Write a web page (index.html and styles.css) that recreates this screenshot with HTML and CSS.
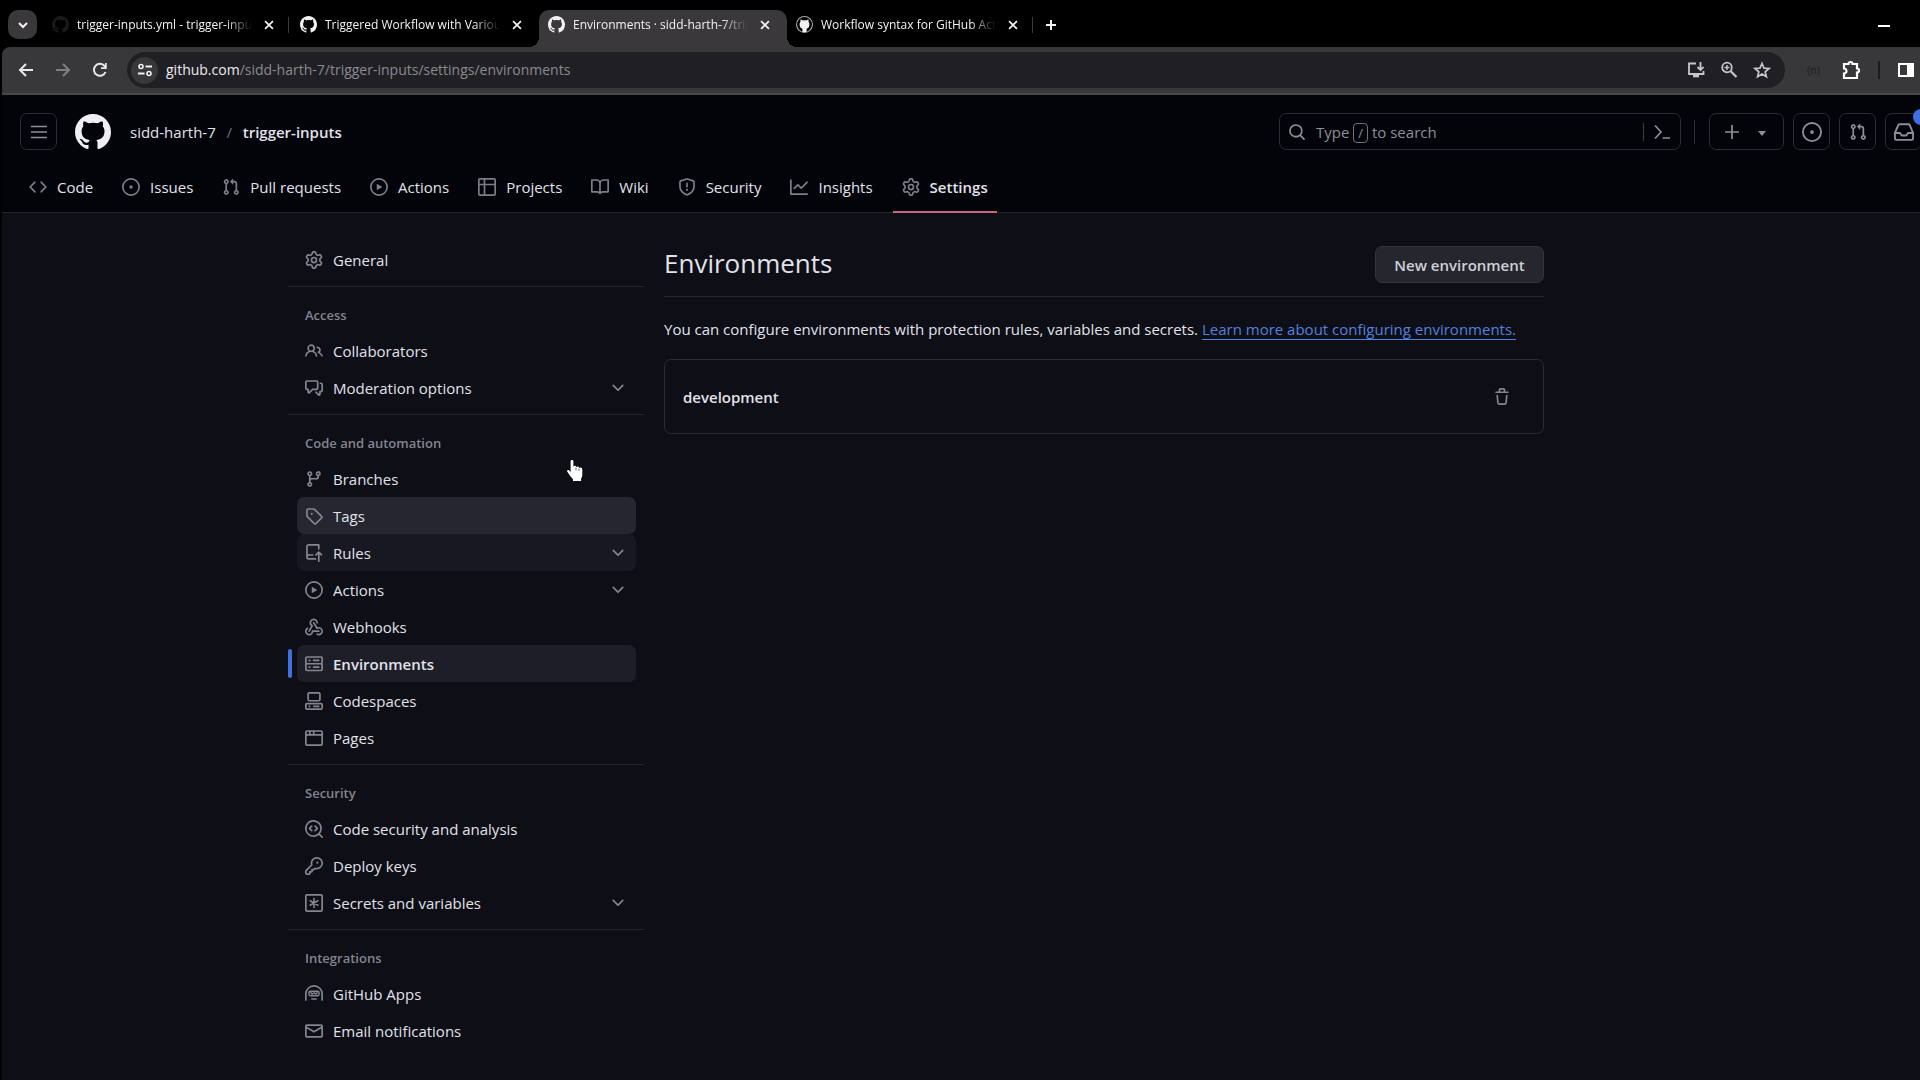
FILE: index.html
```html
<!DOCTYPE html>
<html lang="en">
<head>
<meta charset="utf-8">
<title>Environments · sidd-harth-7/trigger-inputs</title>
<link rel="stylesheet" href="styles.css">
</head>
<body>
<svg class="sprite" aria-hidden="true">
  <symbol id="mark" viewBox="0 0 16 16"><path d="M8 0c4.42 0 8 3.58 8 8a8.013 8.013 0 0 1-5.45 7.59c-.4.08-.55-.17-.55-.38 0-.27.01-1.13.01-2.2 0-.75-.25-1.23-.54-1.48 1.78-.2 3.65-.88 3.65-3.95 0-.88-.31-1.59-.82-2.15.08-.2.36-1.02-.08-2.12 0 0-.67-.22-2.2.82-.64-.18-1.32-.27-2-.27-.68 0-1.36.09-2 .27-1.53-1.03-2.2-.82-2.2-.82-.44 1.1-.16 1.92-.08 2.12-.51.56-.82 1.28-.82 2.15 0 3.06 1.86 3.75 3.64 3.95-.23.2-.44.55-.51 1.07-.46.21-1.61.55-2.33-.66-.15-.24-.6-.83-1.23-.82-.67.01-.27.38.01.53.34.19.73.9.82 1.13.16.45.68 1.31 2.69.94 0 .67.01 1.3.01 1.49 0 .21-.15.45-.55.38A7.995 7.995 0 0 1 0 8c0-4.42 3.58-8 8-8Z"/></symbol>
  <symbol id="mark-alt" viewBox="0 0 16 16"><path fill-rule="evenodd" d="M8 0a8 8 0 1 1 0 16A8 8 0 0 1 8 0Zm0 1a7 7 0 1 0 0 14A7 7 0 0 0 8 1Z" opacity=".7"/><path d="M6 15v-3C3.8 11.500 3.300 9.500 3.400 7.600c0-.9.300-1.500.800-2.100-.2-.6-.1-1.400.1-2.100.8 0 1.500.4 2.100.8 1-.3 2.200-.3 3.200 0 .6-.4 1.300-.8 2.100-.8.2.7.3 1.500.1 2.100.5.6.8 1.200.8 2.100.1 1.900-.4 3.900-2.600 4.400v3Z"/></symbol>
  <symbol id="x" viewBox="0 0 16 16"><path d="M3.500 3.500l9 9m0-9l-9 9" fill="none" stroke="currentColor" stroke-width="2"/></symbol>
  <symbol id="chevron" viewBox="0 0 16 16"><path d="M12.780 5.220a.749.749 0 0 1 0 1.060l-4.250 4.250a.749.749 0 0 1-1.060 0L3.220 6.280a.749.749 0 1 1 1.060-1.060L8 8.939l3.720-3.719a.749.749 0 0 1 1.060 0Z"/></symbol>
  <symbol id="code" viewBox="0 0 16 16"><path d="m11.280 3.220 4.250 4.250a.75.75 0 0 1 0 1.060l-4.250 4.250a.749.749 0 0 1-1.275-.326.749.749 0 0 1 .215-.734L13.940 8l-3.720-3.720a.749.749 0 0 1 .326-1.275.749.749 0 0 1 .734.215Zm-6.560 0a.751.751 0 0 1 1.042.018.751.751 0 0 1 .018 1.042L2.060 8l3.720 3.720a.749.749 0 0 1-.326 1.275.749.749 0 0 1-.734-.215L.47 8.530a.75.75 0 0 1 0-1.060Z"/></symbol>
  <symbol id="issue" viewBox="0 0 16 16"><path d="M8 9.500a1.500 1.500 0 1 0 0-3 1.500 1.500 0 0 0 0 3Z"/><path d="M8 0a8 8 0 1 1 0 16A8 8 0 0 1 8 0ZM1.500 8a6.500 6.500 0 1 0 13 0 6.500 6.500 0 0 0-13 0Z"/></symbol>
  <symbol id="pr" viewBox="0 0 16 16"><path d="M1.500 3.250a2.250 2.250 0 1 1 3 2.122v5.256a2.251 2.251 0 1 1-1.500 0V5.372A2.250 2.250 0 0 1 1.500 3.250Zm5.677-.177L9.573.677A.25.25 0 0 1 10 .854V2.500h1A2.500 2.500 0 0 1 13.500 5v5.628a2.251 2.251 0 1 1-1.500 0V5a1 1 0 0 0-1-1h-1v1.646a.25.25 0 0 1-.427.177L7.177 3.427a.25.25 0 0 1 0-.354ZM3.750 2.500a.75.75 0 1 0 0 1.500.75.75 0 0 0 0-1.500Zm0 9.500a.75.75 0 1 0 0 1.500.75.75 0 0 0 0-1.500Zm8.250.75a.75.75 0 1 0 1.500 0 .75.75 0 0 0-1.500 0Z"/></symbol>
  <symbol id="play" viewBox="0 0 16 16"><path d="M8 0a8 8 0 1 1 0 16A8 8 0 0 1 8 0ZM1.500 8a6.500 6.500 0 1 0 13 0 6.500 6.500 0 0 0-13 0Zm4.879-2.773 4.264 2.559a.25.25 0 0 1 0 .428l-4.264 2.559A.25.25 0 0 1 6 10.559V5.442a.25.25 0 0 1 .379-.215Z"/></symbol>
  <symbol id="table" viewBox="0 0 16 16"><path d="M0 1.750C0 .784.784 0 1.750 0h12.500C15.216 0 16 .784 16 1.750v12.500A1.750 1.750 0 0 1 14.250 16H1.750A1.750 1.750 0 0 1 0 14.250ZM6.500 6.500v8h7.750a.25.25 0 0 0 .25-.25V6.500Zm8-1.500V1.750a.25.25 0 0 0-.25-.25H6.500V5Zm-13 1.500v7.750c0 .138.112.25.25.25H5v-8ZM5 5V1.500H1.750a.25.25 0 0 0-.25.25V5Z"/></symbol>
  <symbol id="book" viewBox="0 0 16 16"><path d="M0 1.750A.75.75 0 0 1 .75 1h4.253c1.227 0 2.317.59 3 1.501A3.743 3.743 0 0 1 11.006 1h4.245a.75.75 0 0 1 .75.75v10.500a.75.75 0 0 1-.75.75h-4.507a2.250 2.250 0 0 0-1.591.659l-.622.621a.75.75 0 0 1-1.060 0l-.622-.621A2.250 2.250 0 0 0 5.258 13H.75a.75.75 0 0 1-.75-.75Zm7.251 10.324.004-5.073-.002-2.253A2.250 2.250 0 0 0 5.003 2.500H1.500v9h3.757a3.750 3.750 0 0 1 1.994.574ZM8.755 4.750l-.004 7.322a3.752 3.752 0 0 1 1.992-.572H14.500v-9h-3.495a2.250 2.250 0 0 0-2.250 2.250Z"/></symbol>
  <symbol id="shield" viewBox="0 0 16 16"><path d="M7.467.133a1.748 1.748 0 0 1 1.066 0l5.250 1.680A1.750 1.750 0 0 1 15 3.480V7c0 1.566-.32 3.182-1.303 4.682-.983 1.498-2.585 2.813-5.032 3.855a1.697 1.697 0 0 1-1.330 0c-2.447-1.042-4.049-2.357-5.032-3.855C1.320 10.182 1 8.566 1 7V3.480a1.750 1.750 0 0 1 1.217-1.667Zm.61 1.429a.25.25 0 0 0-.153 0l-5.250 1.680a.25.25 0 0 0-.174.238V7c0 1.358.275 2.666 1.057 3.860.784 1.194 2.121 2.340 4.366 3.297a.196.196 0 0 0 .154 0c2.245-.956 3.582-2.104 4.366-3.298C13.225 9.666 13.500 8.360 13.500 7V3.480a.251.251 0 0 0-.174-.237l-5.250-1.680ZM8.750 4.750v3a.75.75 0 0 1-1.500 0v-3a.75.75 0 0 1 1.500 0ZM9 10.500a1 1 0 1 1-2 0 1 1 0 0 1 2 0Z"/></symbol>
  <symbol id="graph" viewBox="0 0 16 16"><path d="M1.500 1.750V13.500h13.750a.75.75 0 0 1 0 1.500H.75a.75.75 0 0 1-.75-.75V1.750a.75.75 0 0 1 1.500 0Zm14.280 2.530-5.250 5.250a.75.75 0 0 1-1.060 0L7 7.060 4.280 9.780a.751.751 0 0 1-1.042-.018.751.751 0 0 1-.018-1.042l3.250-3.250a.75.75 0 0 1 1.060 0L10 7.940l4.720-4.720a.751.751 0 0 1 1.042.018.751.751 0 0 1 .018 1.042Z"/></symbol>
  <symbol id="gear" viewBox="0 0 16 16"><path d="M8 0a8.200 8.200 0 0 1 .701.031C9.444.095 9.990.645 10.160 1.290l.288 1.107c.018.066.079.158.212.224.231.114.454.243.668.386.123.082.233.090.299.071l1.103-.303c.644-.176 1.392.021 1.820.630.270.385.506.792.704 1.218.315.675.111 1.422-.364 1.891l-.814.806c-.049.048-.098.147-.088.294.016.257.016.515 0 .772-.010.147.038.246.088.294l.814.806c.475.469.679 1.216.364 1.891a7.977 7.977 0 0 1-.704 1.217c-.428.610-1.176.807-1.820.630l-1.102-.302c-.067-.019-.177-.011-.300.071a5.909 5.909 0 0 1-.668.386c-.133.066-.194.158-.211.224l-.290 1.106c-.168.646-.715 1.196-1.458 1.260a8.006 8.006 0 0 1-1.402 0c-.743-.064-1.289-.614-1.458-1.260l-.289-1.106c-.018-.066-.079-.158-.212-.224a5.738 5.738 0 0 1-.668-.386c-.123-.082-.233-.090-.299-.071l-1.103.303c-.644.176-1.392-.021-1.820-.630a8.120 8.120 0 0 1-.704-1.218c-.315-.675-.111-1.422.363-1.891l.815-.806c.050-.048.098-.147.088-.294a6.214 6.214 0 0 1 0-.772c.010-.147-.038-.246-.088-.294l-.815-.806C.635 6.045.431 5.298.746 4.623a7.920 7.920 0 0 1 .704-1.217c.428-.610 1.176-.807 1.820-.630l1.102.302c.067.019.177.011.300-.071.214-.143.437-.272.668-.386.133-.066.194-.158.211-.224l.290-1.106C6.009.645 6.556.095 7.299.030 7.530.010 7.764 0 8 0Zm-.571 1.525c-.036.003-.108.036-.137.146l-.289 1.105c-.147.561-.549.967-.998 1.189-.173.086-.340.183-.500.290-.417.278-.970.423-1.529.270l-1.103-.303c-.109-.030-.175.016-.195.045-.220.312-.412.644-.573.990-.014.031-.021.110.059.190l.815.806c.411.406.562.957.530 1.456a4.709 4.709 0 0 0 0 .582c.032.499-.119 1.050-.530 1.456l-.815.806c-.081.080-.073.159-.059.190.162.346.353.677.573.989.020.030.085.076.195.046l1.102-.303c.560-.153 1.113-.008 1.530.270.161.107.328.204.501.290.447.222.850.629.997 1.189l.289 1.105c.029.109.101.143.137.146a6.600 6.600 0 0 0 1.142 0c.036-.003.108-.036.137-.146l.289-1.105c.147-.561.549-.967.998-1.189.173-.086.340-.183.500-.290.417-.278.970-.423 1.529-.270l1.103.303c.109.029.175-.016.195-.045.220-.313.411-.644.573-.990.014-.031.021-.110-.059-.190l-.815-.806c-.411-.406-.562-.957-.530-1.456a4.709 4.709 0 0 0 0-.582c-.032-.499.119-1.050.530-1.456l.815-.806c.081-.080.073-.159.059-.190a6.464 6.464 0 0 0-.573-.989c-.020-.030-.085-.076-.195-.046l-1.102.303c-.560.153-1.113.008-1.530-.270a4.440 4.440 0 0 0-.501-.290c-.447-.222-.850-.629-.997-1.189l-.289-1.105c-.029-.110-.101-.143-.137-.146a6.600 6.600 0 0 0-1.142 0ZM11 8a3 3 0 1 1-6 0 3 3 0 0 1 6 0ZM9.500 8a1.500 1.500 0 1 0-3.001.001A1.500 1.500 0 0 0 9.500 8Z"/></symbol>
  <symbol id="people" viewBox="0 0 16 16"><path d="M2 5.500a3.500 3.500 0 1 1 5.898 2.549 5.508 5.508 0 0 1 3.034 4.084.75.75 0 1 1-1.482.235 4 4 0 0 0-7.900 0 .75.75 0 0 1-1.482-.236A5.507 5.507 0 0 1 3.102 8.050 3.493 3.493 0 0 1 2 5.500ZM11 4a3.001 3.001 0 0 1 2.220 5.018 5.010 5.010 0 0 1 2.560 3.012.749.749 0 0 1-.885.954.752.752 0 0 1-.549-.514 3.507 3.507 0 0 0-2.522-2.372.75.75 0 0 1-.574-.73v-.352a.75.75 0 0 1 .416-.672A1.500 1.500 0 0 0 11 5.500.75.75 0 0 1 11 4Zm-5.500-.5a2 2 0 1 0-.001 3.999A2 2 0 0 0 5.500 3.500Z"/></symbol>
  <symbol id="comments" viewBox="0 0 16 16"><path d="M1.750 1h8.500c.966 0 1.750.784 1.750 1.750v5.500A1.750 1.750 0 0 1 10.250 10H7.061l-2.574 2.573A1.458 1.458 0 0 1 2 11.543V10h-.25A1.750 1.750 0 0 1 0 8.250v-5.500C0 1.784.784 1 1.750 1ZM1.500 2.750v5.500c0 .138.112.25.25.25h1a.75.75 0 0 1 .75.75v2.190l2.720-2.720a.749.749 0 0 1 .53-.22h3.500a.25.25 0 0 0 .25-.25v-5.500a.25.25 0 0 0-.25-.25h-8.500a.25.25 0 0 0-.25.25Zm13 2a.25.25 0 0 0-.25-.25h-.5a.75.75 0 0 1 0-1.500h.5c.966 0 1.750.784 1.750 1.750v5.500A1.750 1.750 0 0 1 14.250 12H14v1.543a1.458 1.458 0 0 1-2.487 1.030L9.220 12.280a.749.749 0 0 1 .326-1.275.749.749 0 0 1 .734.215l2.220 2.220v-2.190a.75.75 0 0 1 .75-.75h1a.25.25 0 0 0 .25-.25Z"/></symbol>
  <symbol id="branch" viewBox="0 0 16 16"><path d="M9.500 3.250a2.250 2.250 0 1 1 3 2.122V6A2.500 2.500 0 0 1 10 8.500H6a1 1 0 0 0-1 1v1.128a2.251 2.251 0 1 1-1.500 0V5.372a2.250 2.250 0 1 1 1.500 0v1.836A2.493 2.493 0 0 1 6 7h4a1 1 0 0 0 1-1v-.628A2.250 2.250 0 0 1 9.500 3.250Zm-6 0a.75.75 0 1 0 1.500 0 .75.75 0 0 0-1.500 0Zm8.250-.75a.75.75 0 1 0 0 1.500.75.75 0 0 0 0-1.500ZM4.250 12a.75.75 0 1 0 0 1.500.75.75 0 0 0 0-1.500Z"/></symbol>
  <symbol id="tag" viewBox="0 0 16 16"><path d="M1 7.775V2.750C1 1.784 1.784 1 2.750 1h5.025c.464 0 .91.184 1.238.513l6.250 6.250a1.750 1.750 0 0 1 0 2.474l-5.026 5.026a1.750 1.750 0 0 1-2.474 0l-6.250-6.250A1.752 1.752 0 0 1 1 7.775Zm1.500 0c0 .066.026.13.073.177l6.250 6.250a.25.25 0 0 0 .354 0l5.025-5.025a.25.25 0 0 0 0-.354l-6.250-6.250a.25.25 0 0 0-.177-.073H2.750a.25.25 0 0 0-.25.25ZM6 5a1 1 0 1 1 0 2 1 1 0 0 1 0-2Z"/></symbol>
  <symbol id="push" viewBox="0 0 16 16"><path d="M1 2.500A2.500 2.500 0 0 1 3.500 0h8.750a.75.75 0 0 1 .75.75v3.500a.75.75 0 0 1-1.500 0V1.500h-8a1 1 0 0 0-1 1v6.708A2.493 2.493 0 0 1 3.500 9h3.250a.75.75 0 0 1 0 1.500H3.500a1 1 0 0 0 0 2h5.750a.75.75 0 0 1 0 1.500H3.500A2.500 2.500 0 0 1 1 11.500Zm13.230 7.790-1.230-1.224v6.184a.75.75 0 0 1-1.500 0V9.066L10.280 10.280a.75.75 0 0 1-1.060-1.060l2.500-2.500a.75.75 0 0 1 1.060 0l2.500 2.500a.75.75 0 0 1-1.050 1.070Z"/></symbol>
  <symbol id="webhook" viewBox="0 0 16 16"><path d="M5.500 4.250a2.250 2.250 0 0 1 4.500 0 .75.75 0 0 0 1.500 0 3.750 3.750 0 1 0-6.140 2.889l-2.272 4.258a.75.75 0 0 0 1.324.706L7 7.250a.75.75 0 0 0-.309-1.015A2.250 2.250 0 0 1 5.500 4.250Z"/><path d="M7.364 3.607a.75.75 0 0 1 1.030.257l2.608 4.349a3.750 3.750 0 1 1-.628 6.785.75.75 0 0 1 .752-1.299 2.250 2.250 0 1 0-.033-3.880.75.75 0 0 1-1.030-.256L7.107 4.636a.75.75 0 0 1 .257-1.029Z"/><path d="M2.900 8.776A.75.75 0 0 1 2.625 9.800 2.250 2.250 0 1 0 6 11.750a.75.75 0 0 1 .75-.751h5.500a.75.75 0 0 1 0 1.500H7.425a3.751 3.751 0 1 1-5.550-3.998.75.75 0 0 1 1.024.274Z"/></symbol>
  <symbol id="server" viewBox="0 0 16 16"><path d="M1.750 1h12.500c.966 0 1.750.784 1.750 1.750v4c0 .372-.116.717-.314 1 .198.283.314.628.314 1v4a1.750 1.750 0 0 1-1.750 1.750H1.750A1.750 1.750 0 0 1 0 12.750v-4c0-.358.109-.707.314-1a1.739 1.739 0 0 1-.314-1v-4C0 1.784.784 1 1.750 1ZM1.500 2.750v4c0 .138.112.25.25.25h12.500a.25.25 0 0 0 .25-.25v-4a.25.25 0 0 0-.25-.25H1.750a.25.25 0 0 0-.25.25Zm.25 5.750a.25.25 0 0 0-.25.25v4c0 .138.112.25.25.25h12.500a.25.25 0 0 0 .25-.25v-4a.25.25 0 0 0-.25-.25ZM7 4.750A.75.75 0 0 1 7.750 4h4.500a.75.75 0 0 1 0 1.500h-4.500A.75.75 0 0 1 7 4.750ZM7.750 10h4.500a.75.75 0 0 1 0 1.500h-4.500a.75.75 0 0 1 0-1.500ZM3 4.750A.75.75 0 0 1 3.750 4h.5a.75.75 0 0 1 0 1.500h-.5A.75.75 0 0 1 3 4.750ZM3.750 10h.5a.75.75 0 0 1 0 1.500h-.5a.75.75 0 0 1 0-1.500Z"/></symbol>
  <symbol id="codespaces" viewBox="0 0 16 16"><path d="M0 11.250c0-.966.784-1.750 1.750-1.750h12.500c.966 0 1.750.784 1.750 1.750v3A1.750 1.750 0 0 1 14.250 16H1.750A1.750 1.750 0 0 1 0 14.250Zm2-9.500C2 .784 2.784 0 3.750 0h8.500C13.216 0 14 .784 14 1.750v5a1.750 1.750 0 0 1-1.750 1.750h-8.500A1.750 1.750 0 0 1 2 6.750Zm1.750-.25a.25.25 0 0 0-.25.25v5c0 .138.112.25.25.25h8.500a.25.25 0 0 0 .25-.25v-5a.25.25 0 0 0-.25-.25Zm-2 9.500a.25.25 0 0 0-.25.25v3c0 .138.112.25.25.25h12.500a.25.25 0 0 0 .25-.25v-3a.25.25 0 0 0-.25-.25Z"/><path d="M7 12.750a.75.75 0 0 1 .75-.75h4.500a.75.75 0 0 1 0 1.500h-4.500a.75.75 0 0 1-.75-.75Zm-4 0a.75.75 0 0 1 .75-.75h.5a.75.75 0 0 1 0 1.500h-.5a.75.75 0 0 1-.75-.75Z"/></symbol>
  <symbol id="browser" viewBox="0 0 16 16"><path d="M0 2.750C0 1.784.784 1 1.750 1h12.500c.966 0 1.750.784 1.750 1.750v10.500A1.750 1.750 0 0 1 14.250 15H1.750A1.750 1.750 0 0 1 0 13.250ZM14.500 6h-13v7.250c0 .138.112.25.25.25h12.500a.25.25 0 0 0 .25-.25Zm-6-3.500v2h6V2.750a.25.25 0 0 0-.25-.25ZM5 2.500v2h2v-2Zm-3.250 0a.25.25 0 0 0-.25.25V4.500h2v-2Z"/></symbol>
  <symbol id="codescan" viewBox="0 0 16 16"><path d="M8.470 4.970a.75.75 0 0 0 0 1.060L9.940 7.500 8.470 8.970a.75.75 0 1 0 1.060 1.060l2-2a.75.75 0 0 0 0-1.060l-2-2a.75.75 0 0 0-1.060 0ZM6.530 6.030a.75.75 0 0 0-1.060-1.060l-2 2a.75.75 0 0 0 0 1.060l2 2a.75.75 0 1 0 1.060-1.060L5.060 7.500l1.470-1.470Z"/><path d="M12.246 13.307a7.501 7.501 0 1 1 1.060-1.060l2.474 2.473a.749.749 0 1 1-1.060 1.060ZM1.500 7.500a6.002 6.002 0 0 0 3.608 5.504 6.002 6.002 0 0 0 6.486-1.117.748.748 0 0 1 .292-.293A6 6 0 1 0 1.500 7.500Z"/></symbol>
  <symbol id="key" viewBox="0 0 16 16"><path d="M10.500 0a5.499 5.499 0 1 1-1.288 10.848l-.932.932a.749.749 0 0 1-.53.22H7v.75a.749.749 0 0 1-.22.53l-.5.5a.749.749 0 0 1-.53.22H5v.75a.749.749 0 0 1-.22.53l-.5.5a.749.749 0 0 1-.53.22h-2A1.750 1.750 0 0 1 0 14.250v-2c0-.199.079-.389.22-.53l4.932-4.932A5.500 5.500 0 0 1 10.500 0Zm-4 5.500c-.001.431.069.86.205 1.269a.75.75 0 0 1-.181.768L1.500 12.560v1.690c0 .138.112.25.25.25h1.690l.06-.06v-1.190a.75.75 0 0 1 .75-.75h1.190l.06-.06v-1.190a.75.75 0 0 1 .75-.75h1.190l1.023-1.025a.75.75 0 0 1 .768-.18A4 4 0 1 0 6.500 5.500ZM11 6a1 1 0 1 1 0-2 1 1 0 0 1 0 2Z"/></symbol>
  <symbol id="asterisk" viewBox="0 0 16 16"><path d="M14.250 0C15.216 0 16 .784 16 1.750v12.500A1.750 1.750 0 0 1 14.250 16H1.750A1.750 1.750 0 0 1 0 14.250V1.750C0 .784.784 0 1.750 0Zm0 1.500H1.750a.25.25 0 0 0-.25.25v12.500c0 .138.112.25.25.25h12.500a.25.25 0 0 0 .25-.25V1.750a.25.25 0 0 0-.25-.25Z"/><path d="M8 4v8M4.600 6l6.800 4M11.400 6l-6.800 4" fill="none" stroke="currentColor" stroke-width="1.400" stroke-linecap="round"/></symbol>
  <symbol id="hubot" viewBox="0 0 16 16"><path d="M0 8a8 8 0 1 1 16 0v5.250a.75.75 0 0 1-1.500 0V8a6.500 6.500 0 1 0-13 0v5.250a.75.75 0 0 1-1.500 0Z"/><path d="M6 12.500h4M4.750 5.500h6.500a1.200 1.200 0 0 1 1.200 1.200v1.600a1.200 1.200 0 0 1-1.200 1.200h-6.500a1.200 1.200 0 0 1-1.200-1.200V6.700a1.200 1.200 0 0 1 1.200-1.200ZM5.200 6.800l1.200 1.200L8 6.900l1.600 1.100 1.200-1.200" fill="none" stroke="currentColor" stroke-width="1.300" stroke-linecap="round"/></symbol>
  <symbol id="mail" viewBox="0 0 16 16"><path d="M1.750 2h12.500c.966 0 1.750.784 1.750 1.750v8.500A1.750 1.750 0 0 1 14.250 14H1.750A1.750 1.750 0 0 1 0 12.250v-8.500C0 2.784.784 2 1.750 2ZM1.500 12.251c0 .138.112.25.25.25h12.500a.25.25 0 0 0 .25-.25V5.809L8.380 9.397a.75.75 0 0 1-.76 0L1.500 5.809v6.442Zm13-8.181v-.32a.25.25 0 0 0-.25-.25H1.750a.25.25 0 0 0-.25.25v.32L8 7.880Z"/></symbol>
  <symbol id="search" viewBox="0 0 16 16"><path d="M10.680 11.740a6 6 0 0 1-7.922-8.982 6 6 0 0 1 8.982 7.922l3.040 3.040a.749.749 0 0 1-.326 1.275.749.749 0 0 1-.734-.215ZM11.500 7a4.499 4.499 0 1 0-8.997 0A4.499 4.499 0 0 0 11.500 7Z"/></symbol>
  <symbol id="inbox" viewBox="0 0 16 16"><path d="M2.800 2.060A1.750 1.750 0 0 1 4.410 1h7.180c.7 0 1.333.417 1.610 1.060l2.740 6.395c.04.093.06.194.06.295v4.500A1.750 1.750 0 0 1 14.250 15H1.750A1.750 1.750 0 0 1 0 13.250v-4.500c0-.101.020-.202.060-.295Zm1.610.44a.25.25 0 0 0-.23.152L1.887 8H4.750a.75.75 0 0 1 .6.300L6.625 10h2.750l1.275-1.700a.75.75 0 0 1 .6-.300h2.863L11.820 2.652a.25.25 0 0 0-.23-.152Zm10.090 7h-2.875l-1.275 1.700a.75.75 0 0 1-.6.300h-3.500a.75.75 0 0 1-.6-.300L4.375 9.500H1.500v3.750c0 .138.112.25.25.25h12.500a.25.25 0 0 0 .25-.25Z"/></symbol>
  <symbol id="trash" viewBox="0 0 16 16"><path d="M11 1.750V3h2.250a.75.75 0 0 1 0 1.500H2.750a.75.75 0 0 1 0-1.500H5V1.750C5 .784 5.784 0 6.750 0h2.500C10.216 0 11 .784 11 1.750ZM4.496 6.675l.66 6.600a.25.25 0 0 0 .249.225h5.190a.25.25 0 0 0 .249-.225l.66-6.600a.75.75 0 0 1 1.492.149l-.66 6.600A1.748 1.748 0 0 1 10.595 15h-5.190a1.750 1.750 0 0 1-1.741-1.575l-.66-6.600a.75.75 0 1 1 1.492-.150ZM6.500 1.750V3h3V1.750a.25.25 0 0 0-.25-.25h-2.500a.25.25 0 0 0-.25.25Z"/></symbol>
</svg>

<header class="browser">
  <div class="tabstrip">
    <button class="tab-search" aria-label="Search tabs"><svg class="i14 outline" viewBox="0 0 14 14"><path d="M3 5l4 4 4-4" stroke-width="2"/></svg></button>
    <div class="tabs">
      <div class="tab"><svg class="fav dim"><use href="#mark"/></svg><span class="tab-title">trigger-inputs.yml - trigger-inputs</span><button class="close" aria-label="Close tab"><svg class="i14"><use href="#x"/></svg></button></div>
      <div class="tab divided"><svg class="fav"><use href="#mark"/></svg><span class="tab-title">Triggered Workflow with Various Events</span><button class="close" aria-label="Close tab"><svg class="i14"><use href="#x"/></svg></button></div>
      <div class="tab active"><svg class="fav"><use href="#mark"/></svg><span class="tab-title">Environments · sidd-harth-7/trigger-inputs</span><button class="close" aria-label="Close tab"><svg class="i14"><use href="#x"/></svg></button></div>
      <div class="tab"><svg class="fav"><use href="#mark-alt"/></svg><span class="tab-title">Workflow syntax for GitHub Actions</span><button class="close" aria-label="Close tab"><svg class="i14"><use href="#x"/></svg></button></div>
    </div>
    <button class="new-tab divided" aria-label="New tab"><svg class="i14" viewBox="0 0 14 14"><path d="M7 2v10M2 7h10" fill="none" stroke="currentColor" stroke-width="2"/></svg></button>
    <button class="minimize" aria-label="Minimize"></button>
  </div>
  <div class="toolbar">
    <button class="tool" aria-label="Back"><svg class="i16" viewBox="0 0 16 16"><path d="M15 8H2.500M8 2L2 8l6 6" fill="none" stroke="currentColor" stroke-width="2"/></svg></button>
    <button class="tool faded" aria-label="Forward"><svg class="i16" viewBox="0 0 16 16"><path d="M1 8h12.500M8 2l6 6-6 6" fill="none" stroke="currentColor" stroke-width="2"/></svg></button>
    <button class="tool" aria-label="Reload"><svg class="i16" viewBox="0 0 16 16"><path d="M13.500 10A6 6 0 1 1 12.600 4L14 5.500" fill="none" stroke="currentColor" stroke-width="2"/><path d="M14.700 1v6H9V5.300h4V1Z"/></svg></button>
    <div class="address">
      <button class="site-info" aria-label="Site information"><svg class="i16" viewBox="0 0 16 16"><path d="M8.500 4.500H15M1 11.500h6.500" stroke="currentColor" stroke-width="2"/><circle cx="4" cy="4.500" r="2" fill="none" stroke="currentColor" stroke-width="1.600"/><circle cx="12" cy="11.500" r="2" fill="none" stroke="currentColor" stroke-width="1.600"/></svg></button>
      <span class="url"><b>github.com</b>/sidd-harth-7/trigger-inputs/settings/environments</span>
      <button class="tool" aria-label="Install"><svg class="i18 outline" viewBox="0 0 18 18"><path d="M9 2.500H2v10.500h14.500V10M13.500 1v7.500M10.500 6l3 3 3-3" stroke-width="1.800"/><path d="M6 14.800h6" stroke-width="3"/></svg></button>
      <button class="tool" aria-label="Zoom"><svg class="i18 outline" viewBox="0 0 18 18"><circle cx="7" cy="6.500" r="4.800" stroke-width="1.800"/><path d="M10.500 10l6 6" stroke-width="2.200"/><path d="M7 4v5M4.500 6.500h5" stroke-width="1.400"/></svg></button>
      <button class="tool" aria-label="Bookmark"><svg class="i18" viewBox="0 0 18 18"><path d="M9 2.500l2 4.600 5 .4-3.800 3.300 1.200 4.900L9 13.100l-4.400 2.600 1.200-4.900L2 7.500l5-.4Z" fill="none" stroke="currentColor" stroke-width="1.700"/></svg></button>
    </div>
    <button class="tool ext" aria-label="Extension">(n)</button>
    <button class="tool bright" aria-label="Extensions"><svg class="i20" viewBox="0 0 20 20"><path d="M3 4h4.500a2 2 0 0 1 4 0H16v4.500a2 2 0 0 1 0 4V18H3v-4.500a2.300 2.300 0 0 0 0-5Z" fill="none" stroke="currentColor" stroke-width="2.200"/></svg></button>
    <span class="tool-rule"></span>
    <button class="tool bright" aria-label="Side panel"><svg class="i16" viewBox="0 0 16 16"><path d="M0 1h16v14H0ZM2 3v10h7V3Z" fill-rule="evenodd"/></svg></button>
  </div>
</header>

<div class="page">
  <header class="site">
    <div class="topbar">
      <button class="square" aria-label="Menu"><svg class="i20" viewBox="0 0 20 20"><path d="M2 4.500h16M2 10h16M2 15.500h16" stroke="currentColor" stroke-width="1.500"/></svg></button>
      <a class="logo" href="#" aria-label="Homepage"><svg class="i36"><use href="#mark"/></svg></a>
      <div class="crumbs"><a href="#">sidd-harth-7</a><span class="slash">/</span><a class="repo" href="#">trigger-inputs</a></div>
      <button class="searchbox"><svg class="i18"><use href="#search"/></svg><span class="search-hint">Type <kbd>/</kbd> to search</span><span class="prompt"><svg class="i18 outline" viewBox="0 0 18 18"><path d="M2 2.500l6 6.500-6 6.500M9.500 15H17" stroke-width="1.700"/></svg></span></button>
      <span class="top-rule"></span>
      <div class="actions">
        <button class="create" aria-label="Create new"><svg class="i16" viewBox="0 0 16 16"><path d="M8 1v14M1 8h14" stroke="currentColor" stroke-width="1.700"/></svg><svg class="caret" viewBox="0 0 8 5"><path d="M0 0h8L4 5Z"/></svg></button>
        <button class="square" aria-label="Issues"><svg class="i20"><use href="#issue"/></svg></button>
        <button class="square" aria-label="Pull requests"><svg class="i18"><use href="#pr"/></svg></button>
        <button class="square" aria-label="Notifications"><svg class="i20"><use href="#inbox"/></svg><span class="dot"></span></button>
      </div>
    </div>
    <nav class="reponav" aria-label="Repository">
      <a href="#"><svg class="i18"><use href="#code"/></svg>Code</a>
      <a href="#"><svg class="i18"><use href="#issue"/></svg>Issues</a>
      <a href="#"><svg class="i18"><use href="#pr"/></svg>Pull requests</a>
      <a href="#"><svg class="i18"><use href="#play"/></svg>Actions</a>
      <a href="#"><svg class="i18"><use href="#table"/></svg>Projects</a>
      <a href="#"><svg class="i18"><use href="#book"/></svg>Wiki</a>
      <a href="#"><svg class="i18"><use href="#shield"/></svg>Security</a>
      <a href="#"><svg class="i18"><use href="#graph"/></svg>Insights</a>
      <a href="#" class="current"><svg class="i18"><use href="#gear"/></svg>Settings</a>
    </nav>
  </header>

  <div class="content">
    <nav class="sidebar" aria-label="Settings">
      <ul>
        <li><a href="#"><svg class="i18"><use href="#gear"/></svg>General</a></li>
      </ul>
      <h3>Access</h3>
      <ul>
        <li><a href="#"><svg class="i18"><use href="#people"/></svg>Collaborators</a></li>
        <li><a href="#"><svg class="i18"><use href="#comments"/></svg>Moderation options<svg class="i18 more"><use href="#chevron"/></svg></a></li>
      </ul>
      <h3>Code and automation</h3>
      <ul>
        <li><a href="#"><svg class="i18"><use href="#branch"/></svg>Branches</a></li>
        <li><a href="#" class="hover"><svg class="i18"><use href="#tag"/></svg>Tags</a></li>
        <li><a href="#" class="leaving"><svg class="i18"><use href="#push"/></svg>Rules<svg class="i18 more"><use href="#chevron"/></svg></a></li>
        <li><a href="#"><svg class="i18"><use href="#play"/></svg>Actions<svg class="i18 more"><use href="#chevron"/></svg></a></li>
        <li><a href="#"><svg class="i18"><use href="#webhook"/></svg>Webhooks</a></li>
        <li><a href="#" class="selected"><svg class="i18"><use href="#server"/></svg>Environments</a></li>
        <li><a href="#"><svg class="i18"><use href="#codespaces"/></svg>Codespaces</a></li>
        <li><a href="#"><svg class="i18"><use href="#browser"/></svg>Pages</a></li>
      </ul>
      <h3>Security</h3>
      <ul>
        <li><a href="#"><svg class="i18"><use href="#codescan"/></svg>Code security and analysis</a></li>
        <li><a href="#"><svg class="i18"><use href="#key"/></svg>Deploy keys</a></li>
        <li><a href="#"><svg class="i18"><use href="#asterisk"/></svg>Secrets and variables<svg class="i18 more"><use href="#chevron"/></svg></a></li>
      </ul>
      <h3>Integrations</h3>
      <ul>
        <li><a href="#"><svg class="i18"><use href="#hubot"/></svg>GitHub Apps</a></li>
        <li><a href="#"><svg class="i18"><use href="#mail"/></svg>Email notifications</a></li>
      </ul>
    </nav>
    <main>
      <div class="heading"><h2>Environments</h2><button class="primary">New environment</button></div>
      <p>You can configure environments with protection rules, variables and secrets. <a href="#">Learn more about configuring environments.</a></p>
      <div class="card"><a href="#">development</a><button class="delete" aria-label="Delete environment"><svg class="i18"><use href="#trash"/></svg></button></div>
    </main>
  </div>
</div>
<svg class="cursor" viewBox="0 0 18 23" aria-hidden="true"><path d="M6 1c.9 0 1.400.6 1.400 1.500V7.500l1.200-.8c.9 0 1.500.5 1.600 1.300l1.200-.6c.9 0 1.500.6 1.700 1.400l1.200-.4c1.200 0 2 .8 2 2v5.600c0 1.500-.6 2.400-1.200 3.600V22H7v-1.800C5 18 3 15.500 1.200 12.500.8 11.300 1.800 10.500 2.900 11.200L4.600 13V2.500C4.600 1.600 5.100 1 6 1Z"/><path d="M10 8.500v3M13 9.500v2.500" fill="none" stroke="#333" stroke-width=".7"/></svg>
</body>
</html>
```
FILE: styles.css
```css
* { box-sizing: border-box; }
body {
  margin: 0;
  padding-left: 2px;
  min-height: 100vh;
  display: flex;
  flex-direction: column;
  background: #000;
  color: #e2e2ea;
  font: 15px/22px "Open Sans", "Noto Sans", sans-serif;
  overflow-x: hidden;
}
a { color: inherit; text-decoration: none; }
button { padding: 0; border: 0; background: none; color: inherit; font: inherit; }
svg { fill: currentColor; flex: none; }
ul { margin: 0; padding: 0; list-style: none; }
h2, h3, p { margin: 0; }
.sprite { position: absolute; width: 0; height: 0; }
.outline { fill: none; stroke: currentColor; }
.i14 { width: 14px; height: 14px; }
.i16 { width: 16px; height: 16px; }
.i18 { width: 18px; height: 18px; }
.i20 { width: 20px; height: 20px; }
.i36 { width: 36px; height: 36px; }

.tabstrip { display: flex; height: 47px; padding: 10px 30px 0 6px; color: #f2f2f2; font-size: 12px; }
.tab-search { display: grid; place-items: center; width: 29px; height: 29px; border-radius: 10px; background: #3a383b; }
.tabs { display: flex; margin-left: 6px; }
.tab { position: relative; display: flex; align-items: center; width: 248px; height: 37px; padding: 0 14px 8px 9px; gap: 8px; }
.fav { width: 17px; height: 17px; }
.dim { color: #1a1a1b; }
.tab-title { flex: 1; overflow: hidden; white-space: nowrap; line-height: 20px; mask-image: linear-gradient(90deg, #000 85%, transparent); }
.close { display: grid; place-items: center; width: 17px; height: 17px; }
.active { border-radius: 10px 10px 0 0; background: #3a383b; }
.active::before, .active::after { content: ""; position: absolute; bottom: 0; width: 10px; height: 10px; }
.active::before { left: -10px; background: radial-gradient(circle at 0 0, transparent 10px, #3a383b 10px); }
.active::after { right: -10px; background: radial-gradient(circle at 100% 0, transparent 10px, #3a383b 10px); }
.divided { position: relative; }
.divided::before { content: ""; position: absolute; left: -3px; top: 7px; width: 1px; height: 16px; background: #3c3c3e; }
.new-tab { display: grid; place-items: center; width: 32px; height: 30px; }
.minimize { width: 12px; height: 2px; margin: 15px 0 0 auto; background: #fff; }

.toolbar { display: flex; align-items: center; height: 48px; padding: 0 0 0 5px; background: #38373a; border-bottom: 2px solid #48474b; border-radius: 8px 0 0; color: #e8e8ea; }
.tool { display: grid; place-items: center; width: 33px; height: 34px; }
.toolbar > .tool { width: 37px; }
.toolbar > .tool:last-child { width: 28px; }
.faded { color: #808084; }
.bright { color: #fff; }
.address { flex: 1; display: flex; align-items: center; height: 36px; margin: 0 10px 0 9px; padding: 0 7px 0 4px; border-radius: 18px; background: #201f24; color: #c5c5ca; }
.site-info { display: grid; place-items: center; width: 27px; height: 27px; margin-right: 8px; border-radius: 50%; background: #38373a; color: #f0f0f0; }
.url { flex: 1; color: #8a8a90; font-size: 14px; }
.url b { color: #ededf0; font-weight: 400; }
.ext { color: #1d1d20; font-size: 11px; }
.tool-rule { width: 2px; height: 18px; margin: 0 12px 0 9px; background: #1c1c1f; }

.page { flex: 1; background: #0d0e16; }
.site { background: #02040a; border-bottom: 1px solid #25262d; }
.topbar { display: flex; align-items: center; height: 73px; padding: 0 0 0 18px; color: #8d8e98; }
.square { position: relative; display: grid; place-items: center; flex: none; width: 37px; height: 37px; border: 1px solid #2a2c36; border-radius: 7px; }
.logo { display: flex; margin-left: 18px; color: #eeeef4; }
.crumbs { flex: 1; display: flex; margin-left: 19px; color: #e2e2ea; white-space: nowrap; }
.slash { width: 27px; text-align: center; color: #70717a; }
.repo { font-weight: 600; }
.searchbox { display: flex; align-items: center; width: 402px; height: 37px; padding: 0 9px 0 8px; gap: 10px; border: 1px solid #2a2c36; border-radius: 7px; text-align: left; }
.search-hint { flex: 1; }
kbd { padding: 0 4px; border: 1px solid #70717a; border-radius: 4px; font: 13px/18px "Open Sans", sans-serif; }
.prompt { display: flex; padding-left: 9px; border-left: 1px solid #3a3b44; }
.top-rule { width: 1px; height: 24px; margin: 0 14px 0 13px; background: #2a2c36; }
.actions { display: flex; gap: 9px; margin-right: -2px; }
.create { display: flex; align-items: center; justify-content: center; gap: 18px; width: 75px; padding-right: 4px; border: 1px solid #2a2c36; border-radius: 7px; }
.caret { width: 8px; height: 5px; margin-top: 4px; }
.dot { position: absolute; right: -8px; top: -5px; width: 16px; height: 16px; border-radius: 50%; background: #3f6fe0; }
.reponav { display: flex; gap: 11px; height: 44px; padding-left: 18px; }
.reponav a { display: flex; align-items: center; gap: 10px; padding: 0 9px 6px; white-space: nowrap; }
.reponav svg { color: #7d7e88; }
.reponav .current { position: relative; font-weight: 600; }
.current::after { content: ""; position: absolute; left: 0; right: 0; bottom: -1px; height: 2px; background: #c9677b; }

.content { display: grid; grid-template-columns: 356px minmax(0, 880px); gap: 20px; padding: 28px 20px 28px 286px; }
.sidebar ul { padding: 0 8px 8px 9px; }
.sidebar h3 { height: 46px; padding: 11px 17px 0; border-top: 1px solid #22232b; color: #84858f; font-size: 13px; font-weight: 600; line-height: 34px; }
.sidebar li a { position: relative; display: flex; align-items: center; gap: 10px; height: 37px; padding: 0 9px 0 8px; border-radius: 7px; }
.sidebar li svg { color: #84858f; }
.sidebar .more { margin-left: auto; }
.sidebar .hover { background: #25262f; }
.sidebar .leaving { background: #171821; }
.sidebar .selected { background: #1d1e27; font-weight: 600; }
.selected::before { content: ""; position: absolute; left: -9px; top: 4px; width: 4px; height: 29px; border-radius: 3px; background: #4170e0; }

.heading { display: flex; align-items: flex-start; justify-content: space-between; height: 56px; padding-top: 5px; border-bottom: 1px solid #25262e; }
h2 { font-size: 26px; font-weight: 400; line-height: 34px; }
.primary { width: 169px; height: 37px; border: 1px solid #32333c; border-radius: 7px; background: #25262e; color: #d0d0d8; font-weight: 600; }
p { padding: 21px 0 19px; }
p a { color: #5580dc; border-bottom: 1px solid #5580dc; }
.card { display: flex; align-items: center; justify-content: space-between; height: 75px; padding: 0 32px 0 18px; border: 1px solid #2a2b33; border-radius: 7px; font-weight: 600; }
.delete { display: flex; color: #84858f; }
.cursor { position: absolute; left: 566px; top: 459px; width: 18px; height: 23px; color: #fff; }
```
